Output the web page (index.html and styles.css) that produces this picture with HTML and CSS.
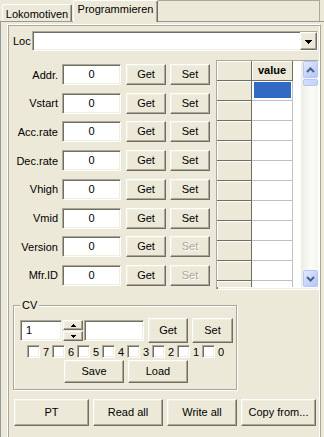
FILE: index.html
```html
<!DOCTYPE html>
<html>
<head>
<meta charset="utf-8">
<link rel="stylesheet" href="styles.css">
</head>
<body>
<div class="tabs">
  <div class="tab">Lokomotiven</div>
  <div class="tab active">Programmieren</div>
  <div class="tab-fill"></div>
</div>
<div class="notebook">
  <div class="page">
    <div class="loc-row">
      <span class="loc-label">Loc</span>
      <div class="combo sunken">
        <div class="combo-btn raised">
          <svg width="7" height="4" viewBox="0 0 7 4" shape-rendering="crispEdges"><path d="M0 0h7v1H0zM1 1h5v1H1zM2 2h3v1H2zM3 3h1v1H3z" fill="#000"/></svg>
        </div>
      </div>
    </div>

    <div class="main">
      <div class="params">
        <div class="prow"><span class="plabel">Addr.</span><div class="field sunken">0</div><button class="btn raised get">Get</button><button class="btn raised">Set</button></div>
        <div class="prow"><span class="plabel">Vstart</span><div class="field sunken">0</div><button class="btn raised get">Get</button><button class="btn raised">Set</button></div>
        <div class="prow"><span class="plabel">Acc.rate</span><div class="field sunken">0</div><button class="btn raised get">Get</button><button class="btn raised">Set</button></div>
        <div class="prow"><span class="plabel">Dec.rate</span><div class="field sunken">0</div><button class="btn raised get">Get</button><button class="btn raised">Set</button></div>
        <div class="prow"><span class="plabel">Vhigh</span><div class="field sunken">0</div><button class="btn raised get">Get</button><button class="btn raised">Set</button></div>
        <div class="prow"><span class="plabel">Vmid</span><div class="field sunken">0</div><button class="btn raised get">Get</button><button class="btn raised">Set</button></div>
        <div class="prow"><span class="plabel">Version</span><div class="field sunken">0</div><button class="btn raised get">Get</button><button class="btn raised disabled">Set</button></div>
        <div class="prow"><span class="plabel">Mfr.ID</span><div class="field sunken">0</div><button class="btn raised get">Get</button><button class="btn raised disabled">Set</button></div>
      </div>

      <div class="grid sunken">
        <div class="gtable">
          <div class="grow ghead"><div class="gl"></div><div class="gv">value</div><div class="gfill"></div></div>
          <div class="grow"><div class="gl"></div><div class="gv"><span class="sel"></span></div><div class="gfill"></div></div>
          <div class="grow"><div class="gl"></div><div class="gv"></div><div class="gfill"></div></div>
          <div class="grow"><div class="gl"></div><div class="gv"></div><div class="gfill"></div></div>
          <div class="grow"><div class="gl"></div><div class="gv"></div><div class="gfill"></div></div>
          <div class="grow"><div class="gl"></div><div class="gv"></div><div class="gfill"></div></div>
          <div class="grow"><div class="gl"></div><div class="gv"></div><div class="gfill"></div></div>
          <div class="grow"><div class="gl"></div><div class="gv"></div><div class="gfill"></div></div>
          <div class="grow"><div class="gl"></div><div class="gv"></div><div class="gfill"></div></div>
          <div class="grow"><div class="gl"></div><div class="gv"></div><div class="gfill"></div></div>
          <div class="grow"><div class="gl"></div><div class="gv"></div><div class="gfill"></div></div>
          <div class="grow"><div class="gl"></div><div class="gv"></div><div class="gfill"></div></div>
        </div>
        <div class="vscroll">
          <div class="sbtn">
            <svg width="9" height="6" viewBox="0 0 9 6"><path d="M1 5 L4.5 1.5 L8 5" fill="none" stroke="#4D6185" stroke-width="2"/></svg>
          </div>
          <div class="thumb"></div>
          <div class="track"></div>
          <div class="sbtn">
            <svg width="9" height="6" viewBox="0 0 9 6"><path d="M1 1 L4.5 4.5 L8 1" fill="none" stroke="#4D6185" stroke-width="2"/></svg>
          </div>
        </div>
      </div>
    </div>

    <div class="cvbox">
      <div class="cv-legend">CV</div>
      <div class="cv-row1">
        <div class="spin-input sunken">1</div>
        <div class="spin">
          <div class="spin-b raised"><svg width="5" height="3" viewBox="0 0 5 3" shape-rendering="crispEdges"><path d="M2 0h1v1H2zM1 1h3v1H1zM0 2h5v1H0z" fill="#000"/></svg></div>
          <div class="spin-b raised"><svg width="5" height="3" viewBox="0 0 5 3" shape-rendering="crispEdges"><path d="M0 0h5v1H0zM1 1h3v1H1zM2 2h1v1H2z" fill="#000"/></svg></div>
        </div>
        <div class="cv-field sunken"></div>
        <button class="btn raised cv-get">Get</button>
        <button class="btn raised cv-set">Set</button>
      </div>
      <div class="bits">
        <div class="bit"><div class="cb sunken"></div><span>7</span></div>
        <div class="bit"><div class="cb sunken"></div><span>6</span></div>
        <div class="bit"><div class="cb sunken"></div><span>5</span></div>
        <div class="bit"><div class="cb sunken"></div><span>4</span></div>
        <div class="bit"><div class="cb sunken"></div><span>3</span></div>
        <div class="bit"><div class="cb sunken"></div><span>2</span></div>
        <div class="bit"><div class="cb sunken"></div><span>1</span></div>
        <div class="bit"><div class="cb sunken"></div><span>0</span></div>
      </div>
      <div class="cv-row3">
        <button class="btn raised wide">Save</button>
        <button class="btn raised wide load">Load</button>
      </div>
    </div>

    <div class="bottom">
      <button class="btn raised b-pt">PT</button>
      <button class="btn raised b-mid">Read all</button>
      <button class="btn raised b-mid">Write all</button>
      <button class="btn raised b-pt">Copy from...</button>
    </div>
  </div>
</div>
</body>
</html>
```

FILE: styles.css
```css
* { box-sizing: border-box; }
html, body { margin: 0; padding: 0; }
body {
  width: 324px;
  height: 437px;
  overflow: hidden;
  background: #ECE9D8;
  font-family: "Liberation Sans", Arial, sans-serif;
  font-size: 11px;
  color: #000;
}

/* generic 3D borders */
.raised {
  background: #ECE9D8;
  border: 1px solid;
  border-color: #FFFFFF #716F64 #716F64 #FFFFFF;
  box-shadow: inset -1px -1px 0 #ACA899, inset 1px 1px 0 #F1EFE2;
}
.sunken {
  background: #FFFFFF;
  border: 1px solid;
  border-color: #ACA899 #FFFFFF #FFFFFF #ACA899;
  box-shadow: inset 1px 1px 0 #716F64, inset -1px -1px 0 #F1EFE2;
}

button {
  font: inherit;
  color: #000;
  margin: 0;
  padding: 0;
  line-height: 13px;
}

/* tabs */
.tabs {
  display: flex;
  align-items: flex-end;
  height: 21px;
  padding-left: 2px;
}
.tab {
  width: 70px;
  height: 17px;
  padding-top: 3px;
  line-height: 13px;
  text-align: center;
  border-top: 1px solid #FFFFFF;
  border-left: 1px solid #FFFFFF;
  border-right: 1px solid #716F64;
  box-shadow: inset -1px 0 0 #ACA899;
  border-radius: 2px 2px 0 0;
}
.tab.active {
  width: 85px;
  height: 22px;
  margin-left: 1px;
  margin-bottom: -1px;
  padding-top: 2px;
  position: relative;
  z-index: 1;
  background: #ECE9D8;
}
.tab-fill {
  flex: 1;
  align-self: flex-start;
  height: 21px;
  margin-right: 4px;
  border-top: 1px solid #ACA899;
  border-right: 1px solid #ACA899;
}

.notebook {
  height: 416px;
  border-top: 1px solid #919B9C;
  border-left: 1px solid #919B9C;
  padding: 2px 0 0 6px;
}
.page {
  width: 314px;
  height: 430px;
  border: 1px solid;
  border-color: #FFFFFF #ACA899 #ACA899 #FFFFFF;
  box-shadow: inset 1px 1px 0 #ACA899, inset -1px -1px 0 #FFFFFF;
  padding: 6px 1px 0 5px;
}

/* Loc row */
.loc-row {
  display: flex;
  align-items: center;
  height: 20px;
}
.loc-label { width: 19px; }
.combo {
  flex: 1;
  height: 20px;
  margin-right: 1px;
  display: flex;
  justify-content: flex-end;
  align-items: flex-start;
}
.combo-btn {
  width: 17px;
  height: 18px;
  display: flex;
  align-items: center;
  justify-content: center;
  padding-top: 1px;
}
.combo-btn svg { display: block; }

/* main area */
.main {
  display: flex;
  margin-top: 9px;
}
.params {
  width: 203px;
  height: 226px;
  padding-top: 4px;
  display: flex;
  flex-direction: column;
  justify-content: space-between;
}
.prow {
  display: flex;
  align-items: center;
  height: 21px;
}
.plabel {
  width: 45px;
  margin-right: 4px;
  text-align: right;
}
.field {
  width: 59px;
  height: 21px;
  margin-right: 5px;
  text-align: center;
  line-height: 19px;
}
.btn {
  width: 40px;
  height: 21px;
  text-align: center;
}
.btn.get { margin-right: 4px; }
.btn.disabled {
  color: #ACA899;
  text-shadow: 1px 1px 0 #FFFFFF;
}

/* grid */
.grid {
  width: 103px;
  height: 230px;
  display: flex;
  margin-right: -1px;
}
.gtable {
  flex: 1;
  height: 226px;
  overflow: hidden;
  background: #FFFFFF;
}
.grow {
  display: flex;
  height: 20px;
}
.gl {
  width: 35px;
  background: #ECE9D8;
  border-right: 1px solid #716F64;
  border-bottom: 1px solid #716F64;
  box-shadow: inset 1px 1px 0 #FFFFFF;
}
.gv {
  width: 41px;
  background: #FFFFFF;
  border-right: 1px solid #C0C0C0;
  border-bottom: 1px solid #C0C0C0;
}
.ghead .gv {
  background: #ECE9D8;
  border-color: #716F64;
  box-shadow: inset 1px 1px 0 #FFFFFF;
  font-weight: bold;
  text-align: center;
  line-height: 19px;
}
.gfill { flex: 1; }
.sel {
  display: block;
  width: 37px;
  height: 16px;
  margin: 1px 0 0 2px;
  background: #316AC5;
}

.vscroll {
  width: 17px;
  height: 226px;
  display: flex;
  flex-direction: column;
  background: linear-gradient(to right, #EEEDE5, #FBFBF8 60%, #F6F5F0);
}
.sbtn {
  width: 15px;
  height: 17px;
  margin-left: 2px;
  border: 1px solid #B4C8F6;
  border-radius: 2px;
  background: linear-gradient(135deg, #E1EAFE, #C3D3FA 60%, #B4C8F6);
  display: flex;
  align-items: center;
  justify-content: center;
}
.sbtn svg { display: block; }
.thumb {
  width: 15px;
  height: 7px;
  margin: 1px 0 0 2px;
  border: 1px solid #B4C8F6;
  border-radius: 2px;
  background: linear-gradient(to right, #D2DEFB, #C3D3FA);
}
.track { flex: 1; }

/* CV group */
.cvbox {
  width: 224px;
  height: 85px;
  margin-top: 15px;
  border: 1px solid #ACA899;
  box-shadow: 1px 1px 0 #FFFFFF, inset 1px 1px 0 #FFFFFF;
  padding: 0 3px 0 6px;
}
.cv-legend {
  width: max-content;
  height: 12px;
  line-height: 12px;
  margin-top: -7px;
  padding: 0 2px;
  background: #ECE9D8;
}
.cv-row1 {
  display: flex;
  align-items: center;
  height: 25px;
  margin-top: 7px;
}
.spin-input {
  width: 42px;
  height: 21px;
  padding-left: 5px;
  line-height: 19px;
}
.spin {
  width: 20px;
  height: 21px;
  margin-left: 1px;
  display: flex;
  flex-direction: column;
  gap: 1px;
}
.spin-b {
  height: 10px;
  display: flex;
  align-items: center;
  justify-content: center;
}
.spin-b svg { display: block; }
.cv-field {
  width: 60px;
  height: 21px;
  margin-left: 1px;
}
.cv-get { width: 40px; height: 25px; margin-left: 4px; }
.cv-set { width: 41px; height: 25px; margin-left: 4px; }

.bits {
  display: flex;
  height: 13px;
  margin-top: 2px;
  padding-left: 7px;
}
.bit {
  width: 25px;
  display: flex;
  align-items: center;
}
.cb {
  width: 13px;
  height: 13px;
}
.bit span { margin-left: 3px; }

.cv-row3 {
  display: flex;
  margin-top: 2px;
  padding-left: 44px;
}
.btn.wide { width: 60px; height: 23px; }
.btn.load { margin-left: 4px; }

/* bottom buttons */
.bottom {
  display: flex;
  gap: 4px;
  margin-top: 9px;
  padding-left: 1px;
}
.bottom .btn { height: 27px; }
.btn.b-pt { width: 75px; }
.btn.b-mid { width: 70px; }
```
